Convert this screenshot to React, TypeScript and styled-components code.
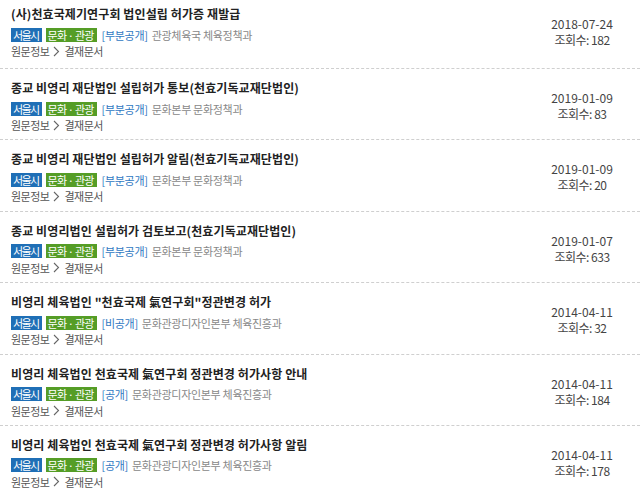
import styled, { createGlobalStyle } from 'styled-components';

const GlobalStyle = createGlobalStyle`
    html, body {
        margin: 0;
        padding: 0;
        background: #fff;
        font-family: "Noto Sans CJK KR", "Noto Sans", sans-serif;
        overflow: hidden;
    }
`;

const docs: Doc[] = [
    {
        title: '(사)천효국제기연구회 법인설립 허가증 재발급',
        open: '부분공개',
        dept: '관광체육국 체육정책과',
        date: '2018-07-24',
        views: 182,
    },
    {
        title: '종교 비영리 재단법인 설립허가 통보(천효기독교재단법인)',
        open: '부분공개',
        dept: '문화본부 문화정책과',
        date: '2019-01-09',
        views: 83,
    },
    {
        title: '종교 비영리 재단법인 설립허가 알림(천효기독교재단법인)',
        open: '부분공개',
        dept: '문화본부 문화정책과',
        date: '2019-01-09',
        views: 20,
    },
    {
        title: '종교 비영리법인 설립허가 검토보고(천효기독교재단법인)',
        open: '부분공개',
        dept: '문화본부 문화정책과',
        date: '2019-01-07',
        views: 633,
    },
    {
        title: '비영리 체육법인 "천효국제 氣연구회"정관변경 허가',
        open: '비공개',
        dept: '문화관광디자인본부 체육진흥과',
        date: '2014-04-11',
        views: 32,
    },
    {
        title: '비영리 체육법인 천효국제 氣연구회 정관변경 허가사항 안내',
        open: '공개',
        dept: '문화관광디자인본부 체육진흥과',
        date: '2014-04-11',
        views: 184,
    },
    {
        title: '비영리 체육법인 천효국제 氣연구회 정관변경 허가사항 알림',
        open: '공개',
        dept: '문화관광디자인본부 체육진흥과',
        date: '2014-04-11',
        views: 178,
    },
];

export default function App() {
    return (
        <>
            <GlobalStyle />
            <List>
                {docs.map((doc) => (
                    <Item key={doc.title + doc.date}>
                        <Main>
                            <Title>{doc.title}</Title>
                            <Meta>
                                <Badge $tone="blue">서울시</Badge>
                                <Badge $tone="green">문화 · 관광</Badge>
                                <Open>[{doc.open}]</Open>
                                <Dept>{doc.dept}</Dept>
                            </Meta>
                            <Path>
                                원문정보
                                <svg width="7" height="11" viewBox="0 0 7 11">
                                    <path
                                        d="M1 1l4.5 4.5L1 10"
                                        fill="none"
                                        stroke="#666"
                                        strokeWidth="1.1"
                                    />
                                </svg>
                                결재문서
                            </Path>
                        </Main>
                        <Side>
                            <span>{doc.date}</span>
                            <span>조회수: {doc.views}</span>
                        </Side>
                    </Item>
                ))}
            </List>
        </>
    );
}

const List = styled.ul`
    list-style: none;
    margin: 0;
    padding: 0;
`;

const Item = styled.li`
    display: flex;
    align-items: center;
    padding: 10px 18px 6.4px 11px;
    border-bottom: 1px dashed #cfcfcf;

    &:first-child {
        padding-top: 5px;
        padding-bottom: 9px;
    }
`;

const Main = styled.div`
    flex: 1;
    min-width: 0;
`;

const Title = styled.p`
    margin: 0;
    font-size: 12px;
    line-height: 18px;
    font-weight: 700;
    letter-spacing: 0.1px;
    color: #222;
    white-space: nowrap;
`;

const Meta = styled.div`
    display: flex;
    align-items: center;
    gap: 4px;
    margin-top: 3px;
    height: 17px;
    font-size: 11px;
    letter-spacing: -0.3px;
`;

const Badge = styled.span<{ $tone: 'blue' | 'green' }>`
    display: inline-block;
    padding: 0 3px 0 2px;
    line-height: 14px;
    letter-spacing: ${({ $tone }) => ($tone === 'blue' ? '-1.6px' : '-0.8px')};
    color: #fff;
    background: ${({ $tone }) => ($tone === 'blue' ? '#1f6fb6' : '#559d26')};
`;

const Open = styled.span`
    color: #2f78c2;
    margin-left: 1px;
`;

const Dept = styled.span`
    color: #888;
`;

const Path = styled.div`
    display: flex;
    align-items: center;
    gap: 3px;
    height: 16px;
    font-size: 11px;
    letter-spacing: -0.5px;
    color: #555;

    svg {
        margin: 0 1px;
    }
`;

const Side = styled.div`
    width: 80px;
    display: flex;
    flex-direction: column;
    align-items: center;
    font-size: 12px;
    line-height: 16px;
    color: #444;

    span:last-child {
        letter-spacing: -0.5px;
    }
`;

interface Doc {
    title: string;
    open: string;
    dept: string;
    date: string;
    views: number;
}
